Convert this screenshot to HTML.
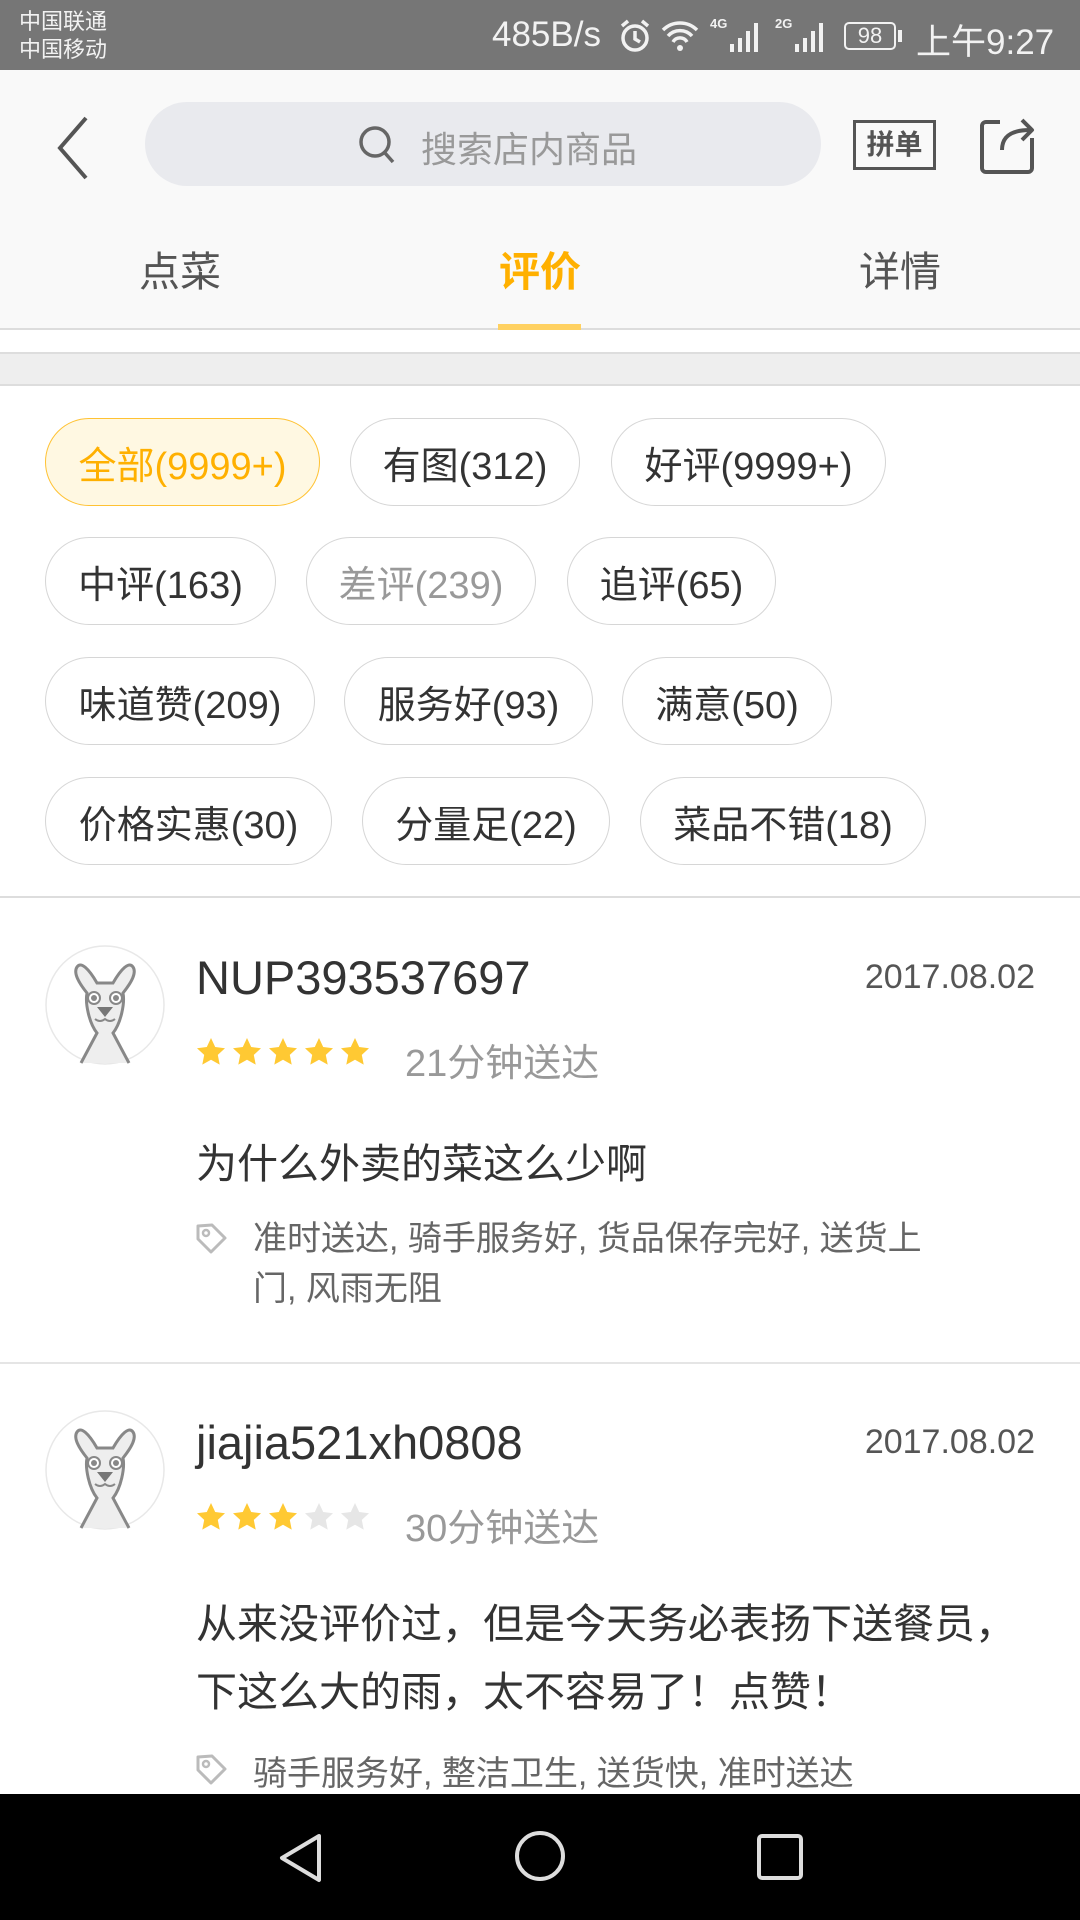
<!DOCTYPE html>
<html><head><meta charset="utf-8"><style>
*{margin:0;padding:0;box-sizing:border-box}
body{width:1080px;height:1920px;overflow:hidden;background:#fff;font-family:"Liberation Sans","Noto Sans CJK SC",sans-serif;position:relative}
.a{position:absolute}
.sb{left:0;top:0;width:1080px;height:70px;background:#767676;color:#f2f2f2}
.hd{left:0;top:70px;width:1080px;height:260px;background:#f9f9f9;border-bottom:2px solid #ddd}
.chip{position:absolute;height:88px;border:1.5px solid #d6d6d6;border-radius:44px;font-size:38px;color:#333;display:flex;align-items:center;justify-content:center;white-space:nowrap}
.sel{border-color:#ffc233;background:#fff8e2;color:#ffb000}
.t{position:absolute;white-space:nowrap}
.star{width:30px;height:30px;display:inline-block;margin-right:6px}
</style></head><body>
<div class="a sb">
 <div class="t" style="left:19px;top:8px;font-size:22px;line-height:28px">中国联通<br>中国移动</div>
 <div class="t" style="left:492px;top:15px;font-size:35px">485B/s</div>
 <svg class="a" style="left:618px;top:18px" width="34" height="36" viewBox="0 0 34 36"><circle cx="17" cy="20" r="12" fill="none" stroke="#f2f2f2" stroke-width="3.5"/><path d="M17 13v8l5 3M4 8l6-5M30 8l-6-5" stroke="#f2f2f2" stroke-width="3.5" fill="none"/></svg>
 <svg class="a" style="left:660px;top:20px" width="40" height="32" viewBox="0 0 40 32"><path d="M3 10a24 24 0 0 1 34 0M8 16a16 16 0 0 1 24 0M13 22a8 8 0 0 1 14 0" stroke="#f2f2f2" stroke-width="3.5" fill="none"/><circle cx="20" cy="28" r="3" fill="#f2f2f2"/></svg>
 <div class="t" style="left:710px;top:16px;font-size:13px;font-weight:bold">4G</div>
 <svg class="a" style="left:728px;top:20px" width="34" height="32"><rect x="2" y="24" width="4" height="8" fill="#f2f2f2"/><rect x="10" y="18" width="4" height="14" fill="#f2f2f2"/><rect x="18" y="11" width="4" height="21" fill="#f2f2f2"/><rect x="26" y="3" width="4" height="29" fill="#f2f2f2"/></svg>
 <div class="t" style="left:775px;top:16px;font-size:13px;font-weight:bold">2G</div>
 <svg class="a" style="left:793px;top:20px" width="34" height="32"><rect x="2" y="24" width="4" height="8" fill="#f2f2f2"/><rect x="10" y="18" width="4" height="14" fill="#f2f2f2"/><rect x="18" y="11" width="4" height="21" fill="#f2f2f2"/><rect x="26" y="3" width="4" height="29" fill="#f2f2f2"/></svg>
 <div class="a" style="left:844px;top:22px;width:52px;height:28px;border:2px solid #f2f2f2;border-radius:5px;font-size:22px;text-align:center;line-height:24px">98</div>
 <div class="a" style="left:898px;top:30px;width:4px;height:12px;background:#f2f2f2"></div>
 <div class="t" style="left:916px;top:14px;font-size:35px">上午9:27</div>
</div>
<div class="a hd">
 <svg class="a" style="left:52px;top:45px" width="40" height="66"><path d="M34 3L8 33l26 30" stroke="#555" stroke-width="4" fill="none"/></svg>
 <div class="a" style="left:145px;top:32px;width:676px;height:84px;border-radius:42px;background:#e9eaee"></div>
 <svg class="a" style="left:357px;top:54px" width="40" height="42"><circle cx="18" cy="18" r="14" stroke="#666" stroke-width="3.5" fill="none"/><path d="M28 29l8 9" stroke="#666" stroke-width="3.5"/></svg>
 <div class="t" style="left:421px;top:51px;font-size:36px;color:#999">搜索店内商品</div>
 <div class="a" style="left:853px;top:50px;width:83px;height:50px;border:3px solid #555;font-size:28px;font-weight:bold;color:#555;text-align:center;line-height:44px">拼单</div>
 <svg class="a" style="left:978px;top:46px" width="60" height="60"><path d="M22 6H8a4 4 0 0 0-4 4v42a4 4 0 0 0 4 4h42a4 4 0 0 0 4-4V22M24 34c0-14 10-20 28-20M44 4l10 10-10 10" stroke="#555" stroke-width="4" fill="none" stroke-linejoin="round"/></svg>
 <div class="t" style="left:139px;top:168px;font-size:41px;color:#555">点菜</div>
 <div class="t" style="left:499px;top:168px;font-size:41px;color:#ffb000;font-weight:bold">评价</div>
 <div class="t" style="left:859px;top:168px;font-size:41px;color:#555">详情</div>
 <div class="a" style="left:498px;top:254px;width:83px;height:6px;background:#ffd161"></div>
</div>
<div class="a" style="left:0;top:352px;width:1080px;height:34px;background:#eee;border-top:2px solid #ddd;border-bottom:2px solid #ddd"></div>
<div class="chip sel" style="left:45px;top:418px;width:275px">全部(9999+)</div>
<div class="chip" style="left:350px;top:418px;width:230px">有图(312)</div>
<div class="chip" style="left:611px;top:418px;width:275px">好评(9999+)</div>
<div class="chip" style="left:45px;top:537px;width:231px">中评(163)</div>
<div class="chip" style="left:306px;top:537px;width:230px;color:#999">差评(239)</div>
<div class="chip" style="left:567px;top:537px;width:209px">追评(65)</div>
<div class="chip" style="left:45px;top:657px;width:270px">味道赞(209)</div>
<div class="chip" style="left:344px;top:657px;width:249px">服务好(93)</div>
<div class="chip" style="left:622px;top:657px;width:210px">满意(50)</div>
<div class="chip" style="left:45px;top:777px;width:287px">价格实惠(30)</div>
<div class="chip" style="left:362px;top:777px;width:248px">分量足(22)</div>
<div class="chip" style="left:640px;top:777px;width:286px">菜品不错(18)</div>
<div class="a" style="left:0;top:896px;width:1080px;height:2px;background:#ddd"></div>

<svg width="0" height="0" style="position:absolute"><defs>
<symbol id="st" viewBox="0 0 30 30"><path d="M15 1l4.2 9 9.8 1.2-7.2 6.7 1.9 9.7L15 22.8l-8.7 4.8 1.9-9.7L1 11.2l9.8-1.2z"/></symbol>
<symbol id="av" viewBox="0 0 120 120"><circle cx="60" cy="60" r="59" fill="#fff" stroke="#e8e8e8" stroke-width="1.5"/><path d="M36 118l16-30c-8-10-12-30-10-40-8-10-14-20-10-26 4-6 12 2 20 16h16c8-14 16-22 20-16 4 6-2 16-10 26 2 10-2 30-10 40l16 30" fill="#eee" stroke="#888" stroke-width="3"/><circle cx="49" cy="53" r="6" fill="#fff" stroke="#888" stroke-width="2"/><circle cx="71" cy="53" r="6" fill="#fff" stroke="#888" stroke-width="2"/><circle cx="49" cy="53" r="3" fill="#888"/><circle cx="71" cy="53" r="3" fill="#888"/><path d="M52 62h16l-8 10z" fill="#777"/><path d="M50 74q5 4 10 0q5 4 10 0" stroke="#888" stroke-width="2" fill="none"/></symbol>
<symbol id="tg" viewBox="0 0 34 34"><path d="M4 5l14-1 13 13-14 14L4 18z" fill="none" stroke="#bbb" stroke-width="3" stroke-linejoin="round"/><circle cx="12" cy="12" r="3" fill="none" stroke="#bbb" stroke-width="2.5"/></symbol>
</defs></svg>

<svg class="a" style="left:45px;top:945px" width="120" height="120"><use href="#av"/></svg>
<div class="t" style="left:196px;top:950px;font-size:47px;color:#333">NUP393537697</div>
<div class="t" style="right:45px;top:958px;font-size:34px;color:#555">2017.08.02</div>
<div class="a" style="left:196px;top:1037px;fill:#ffc933"><svg class="star"><use href="#st"/></svg><svg class="star"><use href="#st"/></svg><svg class="star"><use href="#st"/></svg><svg class="star"><use href="#st"/></svg><svg class="star"><use href="#st"/></svg></div>
<div class="t" style="left:405px;top:1032px;font-size:38px;color:#999">21分钟送达</div>
<div class="t" style="left:196px;top:1130px;font-size:41px;color:#333">为什么外卖的菜这么少啊</div>
<svg class="a" style="left:194px;top:1221px" width="34" height="34"><use href="#tg"/></svg>
<div class="a" style="left:253px;top:1214px;width:705px;font-size:34px;line-height:50px;color:#666">准时送达, 骑手服务好, 货品保存完好, 送货上门, 风雨无阻</div>
<div class="a" style="left:0;top:1362px;width:1080px;height:2px;background:#e5e5e5"></div>

<svg class="a" style="left:45px;top:1410px" width="120" height="120"><use href="#av"/></svg>
<div class="t" style="left:196px;top:1415px;font-size:47px;color:#333">jiajia521xh0808</div>
<div class="t" style="right:45px;top:1423px;font-size:34px;color:#555">2017.08.02</div>
<div class="a" style="left:196px;top:1502px;fill:#ffc933"><svg class="star"><use href="#st"/></svg><svg class="star"><use href="#st"/></svg><svg class="star"><use href="#st"/></svg><svg class="star" style="fill:#e6e6e6"><use href="#st"/></svg><svg class="star" style="fill:#e6e6e6"><use href="#st"/></svg></div>
<div class="t" style="left:405px;top:1497px;font-size:38px;color:#999">30分钟送达</div>
<div class="a" style="left:196px;top:1590px;width:840px;font-size:41px;line-height:68px;color:#333">从来没评价过，但是今天务必表扬下送餐员，下这么大的雨，太不容易了！点赞！</div>
<svg class="a" style="left:194px;top:1752px" width="34" height="34"><use href="#tg"/></svg>
<div class="t" style="left:253px;top:1746px;font-size:34px;color:#666">骑手服务好, 整洁卫生, 送货快, 准时送达</div>

<div class="a" style="left:0;top:1794px;width:1080px;height:126px;background:#000">
 <svg class="a" style="left:276px;top:38px" width="50" height="52"><path d="M43 4L6 26l37 22z" fill="none" stroke="#ddd" stroke-width="4" stroke-linejoin="round"/></svg>
 <svg class="a" style="left:514px;top:36px" width="52" height="52"><circle cx="26" cy="26" r="23" fill="none" stroke="#ddd" stroke-width="4"/></svg>
 <svg class="a" style="left:757px;top:40px" width="46" height="46"><rect x="2" y="2" width="42" height="42" rx="3" fill="none" stroke="#ddd" stroke-width="4"/></svg>
</div>
</body></html>
